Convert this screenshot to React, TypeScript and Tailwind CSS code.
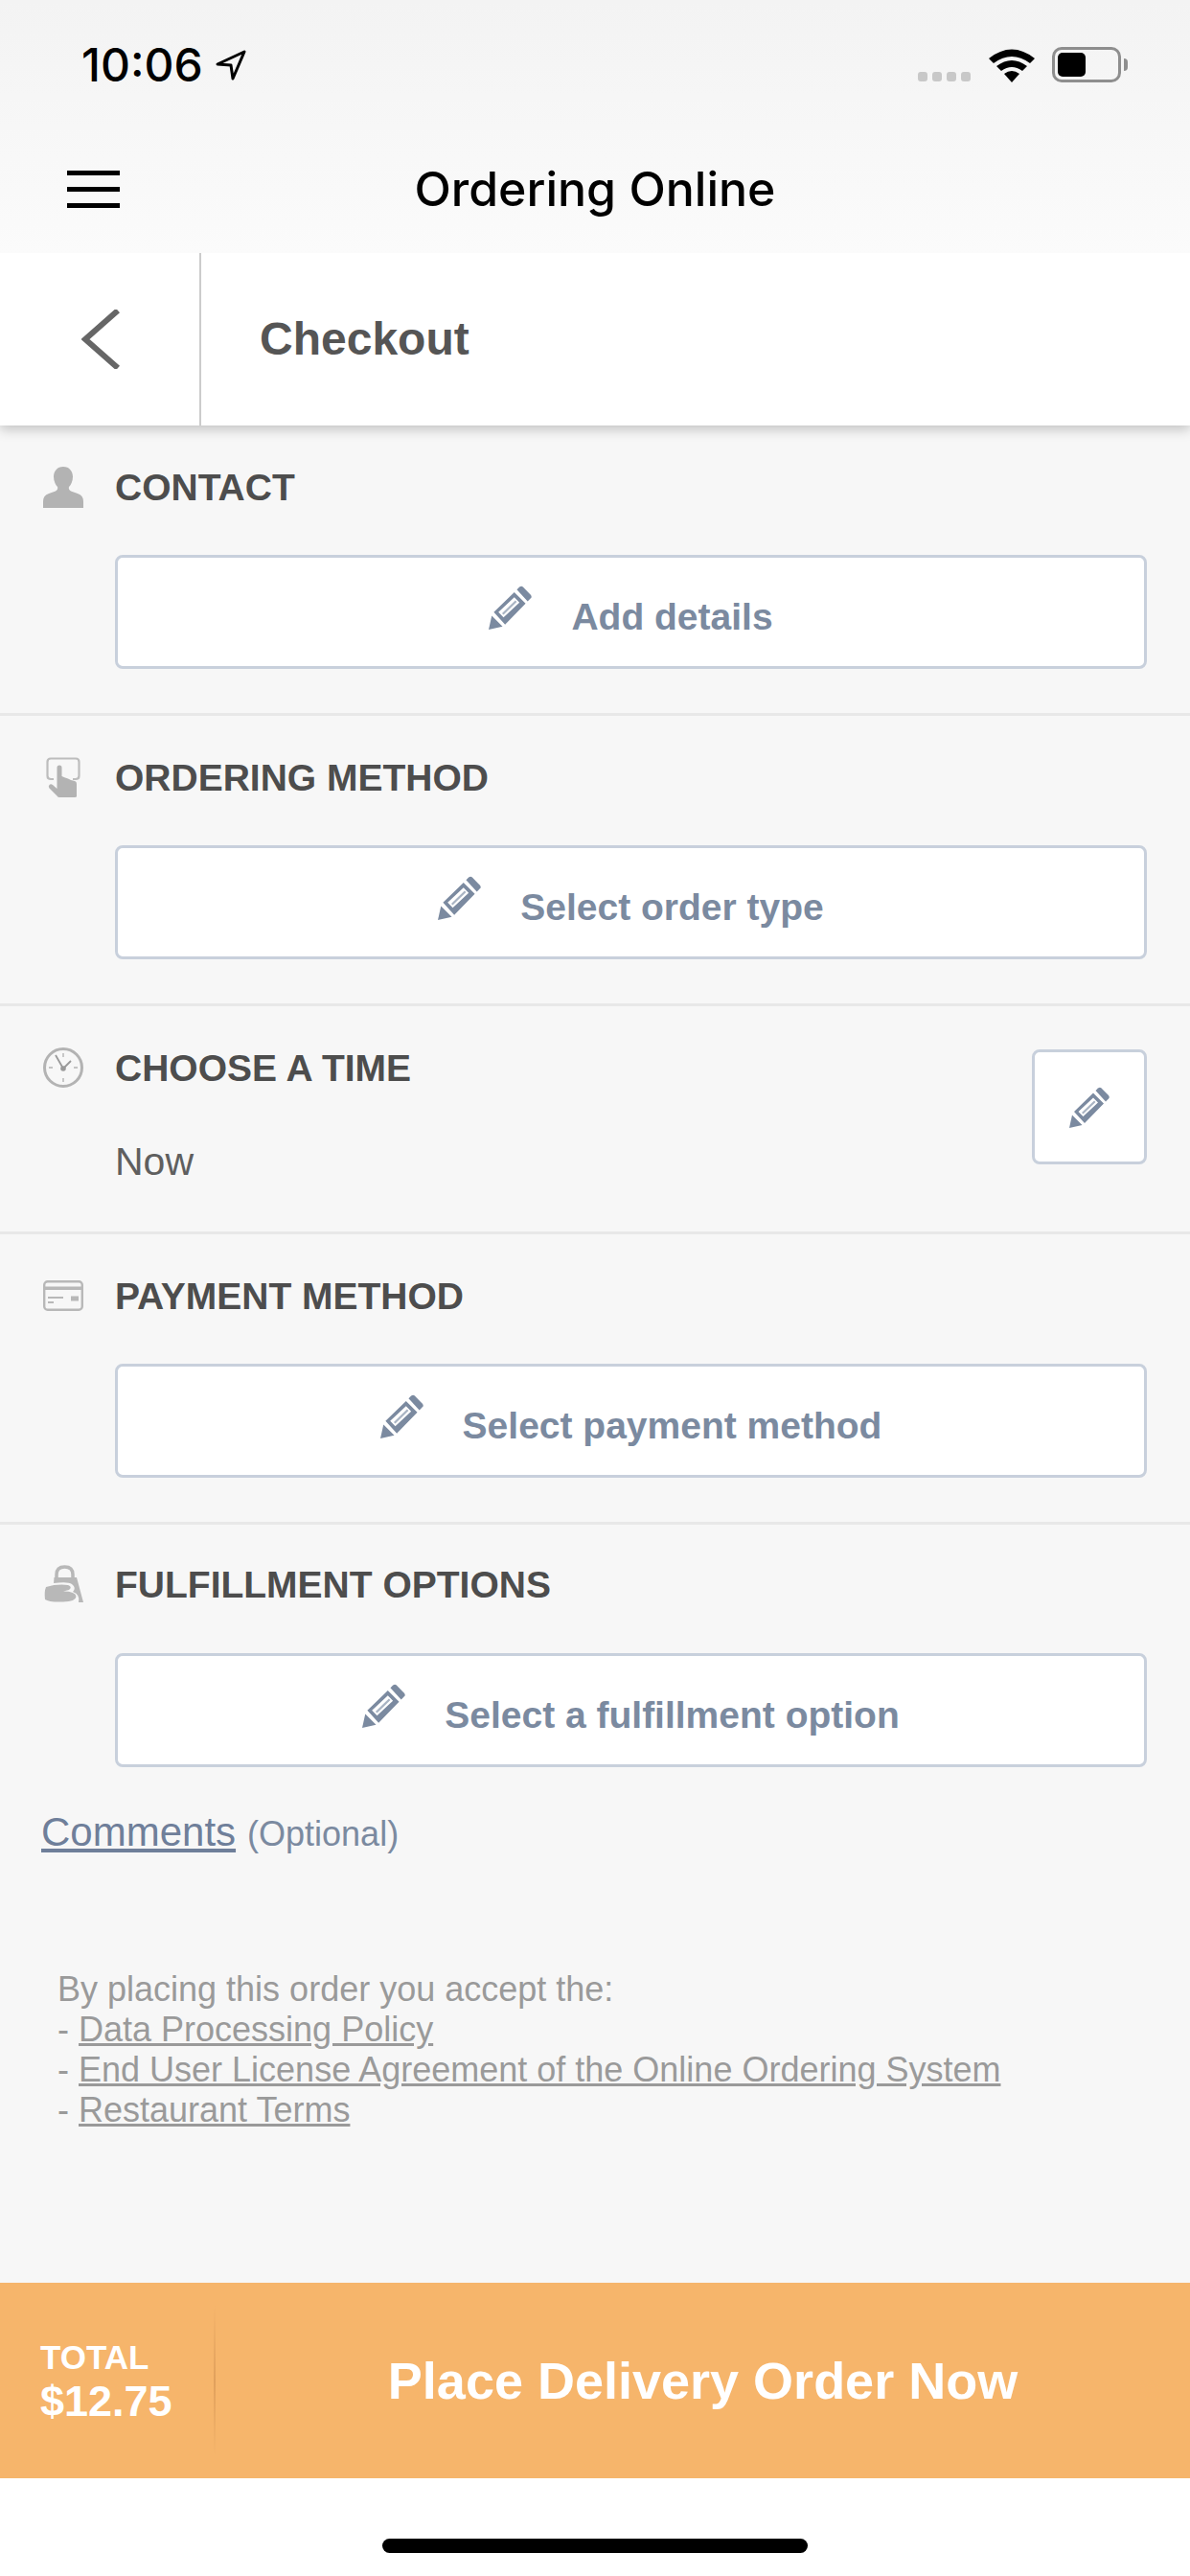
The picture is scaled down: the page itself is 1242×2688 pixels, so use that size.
import React from 'react';

const SANS = "font-['Liberation_Sans',Arial,sans-serif]";

function Pencil({ className }: { className?: string }) {
  return (
    <svg viewBox="0 0 42 43" className={className} fill="#7b8aa0">
      <path d="M0 43 L3 29.5 L13.5 40 Z" />
      <path
        fillRule="evenodd"
        d="M5 26 L25 6.5 L36 17.5 L16 38 Z M9.5 26 L14.5 31 L30 16.5 L25 11.5 Z"
      />
      <path d="M27.5 4 L30 1.5 Q32 0 33.5 1.5 L41 9 Q42.5 11 41 12.5 L38 15.5 Z" />
      <path d="M13 27 L26 14.5 L27.5 16 L14.5 28.5 Z" fill="#a9b4c3" />
    </svg>
  );
}

function PersonIcon() {
  return (
    <svg viewBox="0 0 42 43" className="w-[42px] h-[43px]" fill="#b3b3b3">
      <path d="M21 0 C27.5 0 31 5 31 10.5 C31 15 29 19 27 21 C26.5 23 27 24.5 29 25.5 L36 28 C40 29.5 42 32 42 36 L42 43 L0 43 L0 36 C0 32 2 29.5 6 28 L13 25.5 C15 24.5 15.5 23 15 21 C13 19 11 15 11 10.5 C11 5 14.5 0 21 0 Z" />
    </svg>
  );
}

function TouchIcon() {
  return (
    <svg viewBox="0 0 36 42" className="w-[36px] h-[42px] ml-[3px]" fill="none">
      <path d="M8 23 H5 Q1.5 23 1.5 19.5 V5 Q1.5 1.5 5 1.5 H31 Q34.5 1.5 34.5 5 V19.5 Q34.5 23 31 23 H28" stroke="#bdbdbd" strokeWidth="2.2" />
      <path
        fill="#b3b3b3"
        d="M11.5 11 Q11.5 8.5 14 8.5 Q16.5 8.5 16.5 11 V20 L20 21.5 L23 22.5 L26 24 L30 25 Q32 25.5 32 28 V41 Q32 42 30 42 H14 Q12.5 42 11.5 40.5 L3.5 32.5 Q2 30.5 3.5 29 Q5 27.5 7 29 L11.5 33 Z"
      />
    </svg>
  );
}

function ClockIcon() {
  return (
    <svg viewBox="0 0 42 42" className="w-[42px] h-[42px]" fill="none" stroke="#b3b3b3">
      <circle cx="21" cy="21" r="19.5" strokeWidth="3" />
      <path d="M21 6 V10 M21 32 V36 M6 21 H10 M32 21 H36" strokeWidth="1.4" />
      <path d="M21 22 L13 8 M21 22 L29 14" stroke="#999999" strokeWidth="1.8" />
      <circle cx="21" cy="22" r="2.8" fill="#999999" stroke="none" />
    </svg>
  );
}

function CardIcon() {
  return (
    <svg viewBox="0 0 42 32" className="w-[42px] h-[32px]" fill="none">
      <rect x="1.2" y="1.2" width="39.6" height="29.6" rx="3.5" stroke="#b8b8b8" strokeWidth="2.4" />
      <rect x="1" y="6.5" width="40" height="3.5" fill="#b8b8b8" />
      <rect x="5" y="17" width="16" height="2" fill="#b8b8b8" />
      <rect x="5" y="22" width="6" height="2" fill="#b8b8b8" />
      <rect x="29" y="16.5" width="8" height="5" fill="#b8b8b8" />
    </svg>
  );
}

function BagIcon() {
  return (
    <svg viewBox="0 0 42 40" className="w-[42px] h-[40px] ml-[1px]" fill="none">
      <path d="M13 14 V10 Q13 2 21.5 2 Q30 2 30 10 V14" stroke="#b8b8b8" strokeWidth="3.5" />
      <path fill="#b8b8b8" d="M10.5 13 H34 L41 39 H36 Q38 31 30 28 Q34 24 29 20 Q25 17 10 19 Z" />
      <path fill="#b8b8b8" d="M2 23 Q14 19.5 25 21 Q30 23 26 26 L20 27.5 Q33 27.5 33.5 33 Q33 38 20 38.5 Q5 39 1 36 Q0 28 2 23 Z" />
    </svg>
  );
}

function ActionBox({ label }: { label: string }) {
  return (
    <div className="h-[119px] rounded-lg border-[3px] border-[#c8d0dc] bg-white flex items-center justify-center">
      <div className="flex items-baseline gap-[41px]">
        <Pencil className="w-[45px] h-[46px]" />
        <span className="text-[39px] leading-[46px] font-bold text-[#7b8aa0]">{label}</span>
      </div>
    </div>
  );
}

function SectionTitle({ icon, title }: { icon: React.ReactNode; title: string }) {
  return (
    <div className="flex items-center h-[48px]">
      <div className="w-[120px] pl-[45px] flex items-center shrink-0">{icon}</div>
      <span className="pt-[2px] text-[39px] font-bold text-[#4d4d4d] whitespace-nowrap">{title}</span>
    </div>
  );
}

function Section({ icon, title, action }: { icon: React.ReactNode; title: string; action: string }) {
  return (
    <section className="pt-[40px] pb-[46px] border-b-[3px] border-[#e8e8e8]">
      <SectionTitle icon={icon} title={title} />
      <div className="mt-[47px] ml-[120px] mr-[45px]">
        <ActionBox label={action} />
      </div>
    </section>
  );
}

export default function App() {
  return (
    <div className={`w-[1242px] h-[2688px] flex flex-col bg-[#f7f7f7] overflow-hidden ${SANS}`}>
      {/* status bar + app bar */}
      <header className="relative z-20 h-[264px] shrink-0 bg-gradient-to-b from-[#f3f3f3] to-[#fbfbfb] font-['Inter',sans-serif] text-black">
        <div className="h-[136px] flex items-start justify-between">
          <div className="flex items-center gap-[13px] pl-[85px] pt-[44px]">
            <span className="text-[48px] leading-[48px] font-medium">10:06</span>
            <svg viewBox="0 0 32 32" className="w-[32px] h-[32px]" fill="none" stroke="#000" strokeWidth="3" strokeLinejoin="round">
              <path d="M2 15 L30 2 L18 30 L16 16 Z" />
            </svg>
          </div>
          <div className="flex items-end pt-[49px] pr-[65px]">
            <div className="flex gap-[5px] mb-[1px] mr-[19px]">
              <span className="w-[10px] h-[10px] rounded-[3px] bg-[#c8c8c8]" />
              <span className="w-[10px] h-[10px] rounded-[3px] bg-[#c8c8c8]" />
              <span className="w-[10px] h-[10px] rounded-[3px] bg-[#c8c8c8]" />
              <span className="w-[10px] h-[10px] rounded-[3px] bg-[#c8c8c8]" />
            </div>
            <svg viewBox="0 0 48 36" className="w-[48px] h-[36px] mr-[18px]" fill="#000">
              <path d="M0 11 Q24 -8 48 11 L43 16 Q24 2 5 16 Z" />
              <path d="M8 19 Q24 7 40 19 L35 24 Q24 16 13 24 Z" />
              <path d="M16 27 Q24 21 32 27 L24 36 Z" />
            </svg>
            <div className="flex items-center">
              <div className="w-[72px] h-[37px] rounded-[10px] border-[3px] border-[#8e8e8e] p-[3px]">
                <div className="w-[29px] h-full rounded-[5px] bg-black" />
              </div>
              <div className="w-[4px] h-[13px] ml-[3px] rounded-r-full bg-[#8e8e8e]" />
            </div>
          </div>
        </div>
        <div className="relative h-[100px] flex items-center justify-center">
          <div className="absolute left-[70px] top-[42px] w-[55px] h-[39px] flex flex-col justify-between">
            <span className="h-[5px] bg-black" />
            <span className="h-[5px] bg-black" />
            <span className="h-[5px] bg-black" />
          </div>
          <span className="text-[50px] leading-[60px] font-medium mt-[22px]">Ordering Online</span>
        </div>
      </header>

      {/* page title */}
      <div className="relative z-10 h-[180px] shrink-0 flex bg-white shadow-[0_4px_12px_rgba(0,0,0,0.22)]">
        <div className="w-[210px] flex items-center border-r-2 border-[#cccccc] pl-[85px]">
          <svg viewBox="0 0 40 62" className="w-[40px] h-[62px]" fill="none" stroke="#666666" strokeWidth="6">
            <path d="M38 1 L4 31 L38 61" />
          </svg>
        </div>
        <div className="pl-[61px] flex items-center">
          <span className="text-[48px] font-bold text-[#555555]">Checkout</span>
        </div>
      </div>

      <main className="flex-1 min-h-0">
        <Section icon={<PersonIcon />} title="CONTACT" action="Add details" />
        <Section icon={<TouchIcon />} title="ORDERING METHOD" action="Select order type" />

        <section className="h-[238px] flex justify-between border-b-[3px] border-[#e8e8e8] pr-[45px]">
          <div className="pt-[40px]">
            <SectionTitle icon={<ClockIcon />} title="CHOOSE A TIME" />
            <p className="ml-[120px] mt-[50px] text-[41px] leading-[48px] text-[#5f5f5f]">Now</p>
          </div>
          <div className="mt-[45px] w-[120px] h-[120px] rounded-lg border-[3px] border-[#c8d0dc] bg-white flex items-center justify-center">
            <Pencil className="w-[42px] h-[43px]" />
          </div>
        </section>

        <Section icon={<CardIcon />} title="PAYMENT METHOD" action="Select payment method" />

        <section className="pt-[38px]">
          <SectionTitle icon={<BagIcon />} title="FULFILLMENT OPTIONS" />
          <div className="mt-[48px] ml-[120px] mr-[45px]">
            <ActionBox label="Select a fulfillment option" />
          </div>
        </section>

        <div className="pl-[43px] mt-[41px] flex items-baseline gap-[12px]">
          <span className="text-[42px] leading-[54px] text-[#6f7f9a] underline">Comments</span>
          <span className="text-[36px] text-[#7b8aa0]">(Optional)</span>
        </div>

        <div className="pl-[60px] mt-[114px] text-[36px] leading-[42px] text-[#9a9a9a]">
          <p>By placing this order you accept the:</p>
          <p>- <span className="underline">Data Processing Policy</span></p>
          <p>- <span className="underline">End User License Agreement of the Online Ordering System</span></p>
          <p>- <span className="underline">Restaurant Terms</span></p>
        </div>
      </main>

      {/* bottom action bar */}
      <div className="h-[204px] shrink-0 flex items-center bg-[#f6b56b] text-white">
        <div className="w-[223px] flex flex-col pl-[42px]">
          <span className="text-[35px] leading-[44px] font-bold">TOTAL</span>
          <span className="text-[45px] leading-[48px] font-bold">$12.75</span>
        </div>
        <div className="w-[2px] h-[157px] bg-gradient-to-b from-transparent via-[#e0a05c] to-transparent" />
        <div className="flex-1 text-center text-[54px] font-bold">Place Delivery Order Now</div>
      </div>
      <div className="h-[102px] shrink-0 bg-white flex justify-center pt-[63px]">
        <div className="w-[444px] h-[15px] rounded-full bg-black" />
      </div>
    </div>
  );
}
